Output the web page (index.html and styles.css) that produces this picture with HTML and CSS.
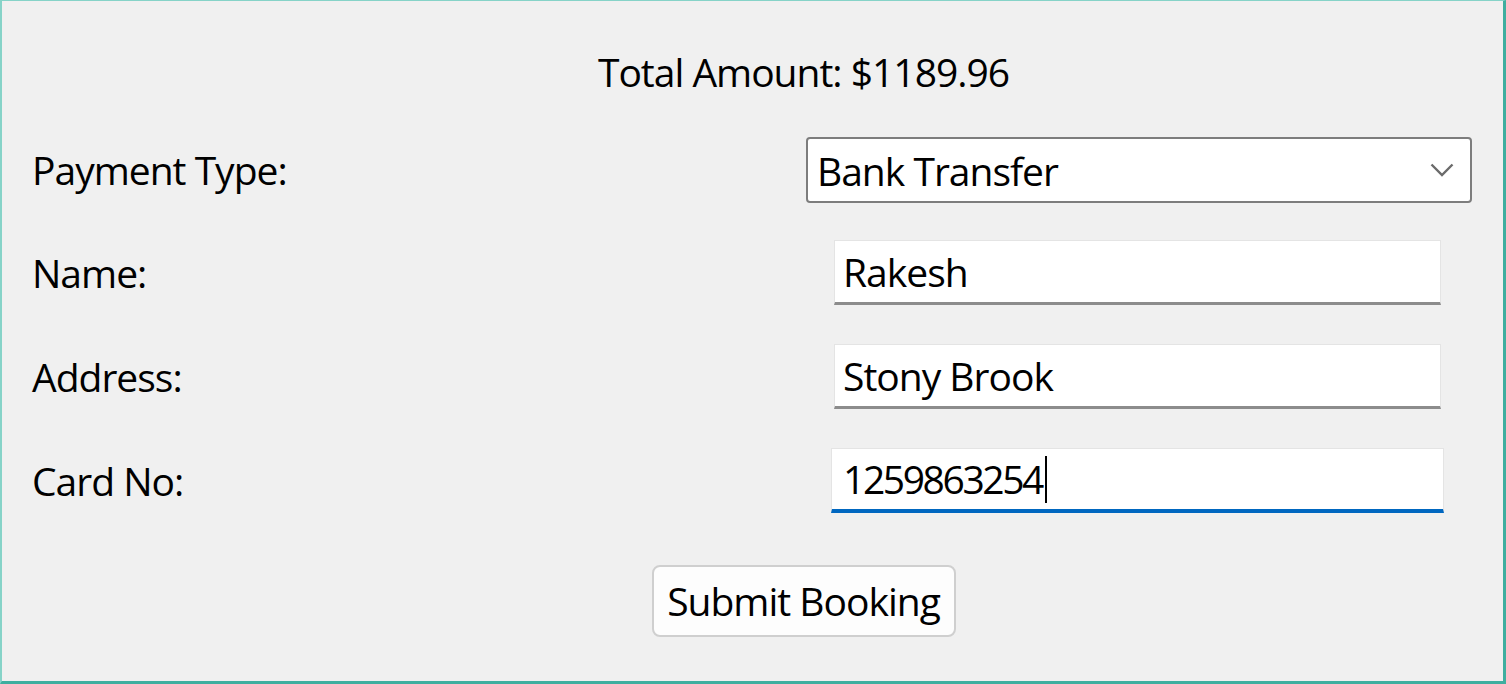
FILE: index.html
```html
<!DOCTYPE html>
<html>
<head>
<meta charset="utf-8">
<link rel="stylesheet" href="styles.css">
</head>
<body>
<div class="window">
  <div class="title-row"><span class="title">Total Amount: $1189.96</span></div>
  <div class="row row-combo">
    <span class="label">Payment Type:</span>
    <div class="combo">
      <span class="combo-text">Bank Transfer</span>
      <svg class="chevron" width="24" height="14" viewBox="0 0 24 14"><path d="M1.5 1.5 L12 12 L22.5 1.5" fill="none" stroke="#6b6b6b" stroke-width="2.4"/></svg>
    </div>
  </div>
  <div class="row row-field">
    <span class="label">Name:</span>
    <div class="textbox"><span class="value">Rakesh</span></div>
  </div>
  <div class="row row-field">
    <span class="label">Address:</span>
    <div class="textbox"><span class="value">Stony Brook</span></div>
  </div>
  <div class="row row-field">
    <span class="label">Card No:</span>
    <div class="textbox focused"><span class="value digits">1259863254</span><span class="caret"></span></div>
  </div>
  <div class="button-row"><button class="btn">Submit Booking</button></div>
</div>
</body>
</html>
```
FILE: styles.css
```css
html, body {
  margin: 0;
  padding: 0;
  background: #f0f0f0;
}
.window {
  width: 1506px;
  height: 684px;
  box-sizing: border-box;
  border-top: 1px solid #86d3c8;
  border-left: 2px solid #86d3c8;
  border-right: 3px solid #3fae9f;
  border-bottom: 3px solid #3fae9f;
  background: #f0f0f0;
  font-family: "Open Sans", "Noto Sans", sans-serif;
  font-size: 39px;
  letter-spacing: -1px;
  color: #000;
  display: flex;
  flex-direction: column;
}
.title-row {
  display: flex;
  justify-content: center;
  padding-left: 102px;
  margin-top: 43px;
  height: 56px;
  line-height: 56px;
}
.row {
  display: flex;
  align-items: center;
  justify-content: space-between;
  padding-left: 30px;
}
.label {
  line-height: 50px;
}
.row-combo {
  margin-top: 37px;
  padding-right: 31px;
}
.combo {
  width: 666px;
  height: 66px;
  box-sizing: border-box;
  border: 2px solid #7d7d7d;
  border-radius: 4px;
  background: #fff;
  display: flex;
  align-items: center;
  justify-content: space-between;
  padding-left: 9px;
  padding-right: 16px;
}
.chevron {
  display: block;
}
.row-field {
  padding-right: 62px;
  margin-top: 37px;
}
.row-field + .row-field {
  margin-top: 39px;
}
.textbox {
  width: 607px;
  height: 65px;
  box-sizing: border-box;
  border: 1px solid #e4e4e4;
  border-bottom: 3px solid #8c8c8c;
  background: #fff;
  display: flex;
  align-items: center;
  padding-left: 8px;
}
.textbox.focused {
  border-bottom: 4px solid #0067c0;
  width: 613px;
  margin-right: -3px;
  padding-left: 11px;
}
.value {
  line-height: 50px;
}
.digits {
  letter-spacing: -2.4px;
}
.caret {
  display: block;
  width: 2px;
  height: 47px;
  background: #000;
  margin-left: 3px;
}
.button-row {
  display: flex;
  justify-content: center;
  padding-left: 102px;
  margin-top: 52px;
}
.btn {
  width: 304px;
  height: 72px;
  box-sizing: border-box;
  border: 2px solid #cfcfcf;
  border-radius: 8px;
  background: #fdfdfd;
  font-family: "Open Sans", "Noto Sans", sans-serif;
  font-size: 39px;
  letter-spacing: -1px;
  color: #000;
  padding: 0;
  line-height: 64px;
}
```
